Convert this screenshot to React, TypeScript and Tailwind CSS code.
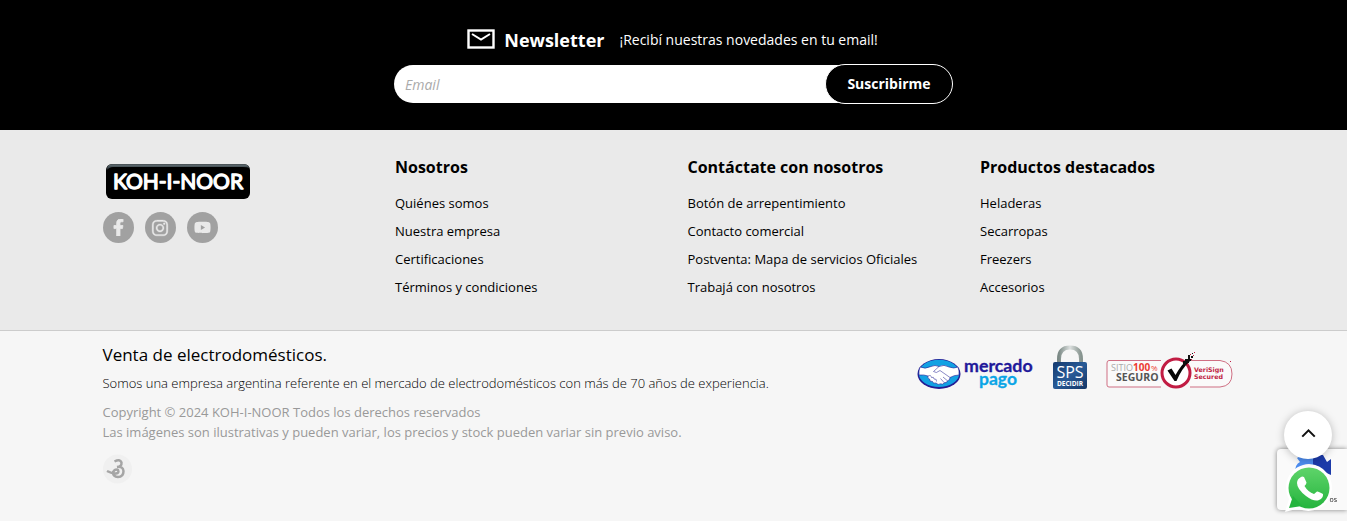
import React from "react";
import { ChevronUp } from "lucide-react";
import { FaFacebookF, FaInstagram, FaYoutube } from "react-icons/fa";

const columns = [
  {
    title: "Nosotros",
    links: ["Quiénes somos", "Nuestra empresa", "Certificaciones", "Términos y condiciones"],
  },
  {
    title: "Contáctate con nosotros",
    links: [
      "Botón de arrepentimiento",
      "Contacto comercial",
      "Postventa: Mapa de servicios Oficiales",
      "Trabajá con nosotros",
    ],
  },
  {
    title: "Productos destacados",
    links: ["Heladeras", "Secarropas", "Freezers", "Accesorios"],
  },
];

function Newsletter() {
  return (
    <section className="bg-black pt-6 pb-[26px] text-white">
      <div className="flex h-8 items-center justify-center">
        <svg width="28" height="22" viewBox="0 0 28 22" fill="none" stroke="white" aria-hidden="true">
          <rect x="1.5" y="1.5" width="25" height="17" strokeWidth="2.4" />
          <path d="M5 5 L14 10.6 L23 5" strokeWidth="2" />
        </svg>
        <h2 className="ml-[9px] text-lg leading-7 font-bold">Newsletter</h2>
        <p className="mr-[2px] ml-[15px] text-sm">¡Recibí nuestras novedades en tu email!</p>
      </div>
      <form className="mx-auto mt-2 flex max-w-[559px] items-center" onSubmit={(e) => e.preventDefault()}>
        <input
          type="email"
          aria-label="Email"
          placeholder="Email"
          className="-mr-5 h-[38px] min-w-0 flex-1 rounded-l-full bg-white px-[11px] text-sm text-black outline-none placeholder:text-[#aaa] placeholder:italic"
        />
        <button type="submit" className="relative h-10 w-32 rounded-full border border-white bg-black text-sm font-bold">
          Suscribirme
        </button>
      </form>
    </section>
  );
}

function Brand() {
  return (
    <svg width="146" height="37" viewBox="0 0 146 37" role="img" aria-label="KOH-I-NOOR" className="ml-[2px] block">
      <defs>
        <linearGradient id="gloss" x1="0" y1="0" x2="0" y2="1">
          <stop offset="0" stopColor="#68757a" />
          <stop offset="0.5" stopColor="#3b464b" />
          <stop offset="1" stopColor="#000" />
        </linearGradient>
      </defs>
      <rect x="1" y="1" width="144" height="35" rx="6" fill="#000" />
      <path d="M1.500 8 Q1.500 1.200 7 1.200 H139 Q143 1.200 144.500 5 Q142 4 138 4 H8 Q4 4 1.500 8Z" fill="url(#gloss)" />
      <text
        x="73"
        y="25.500"
        textAnchor="middle"
        fontFamily="Lato, sans-serif"
        fontWeight="400"
        fontSize="21"
        fill="#fff"
        stroke="#fff"
        strokeWidth="1.300"
        strokeLinejoin="round"
      >
        KOH-I-NOOR
      </text>
    </svg>
  );
}

function Social() {
  const style = "flex size-[31px] items-center justify-center rounded-full bg-[#a1a1a1] text-[#e9e9e9]";
  return (
    <div className="mt-3 flex gap-[11px]">
      <a href="#facebook" aria-label="Facebook" className={style}>
        <FaFacebookF size={17} stroke="currentColor" strokeWidth={24} />
      </a>
      <a href="#instagram" aria-label="Instagram" className={style}>
        <FaInstagram size={18} stroke="currentColor" strokeWidth={10} />
      </a>
      <a href="#youtube" aria-label="YouTube" className={style}>
        <FaYoutube size={17} />
      </a>
    </div>
  );
}

function MercadoPago() {
  return (
    <svg width="117" height="36" viewBox="0 0 117 36" role="img" aria-label="Mercado Pago" className="overflow-visible">
      <ellipse cx="22" cy="17" rx="21.500" ry="15" fill="#241c93" />
      <ellipse cx="22" cy="16.400" rx="20.300" ry="13.600" fill="#12a1e3" />
      <path
        d="M3 10 Q8 12.500 14 9.500 Q18 7.500 22 9.500 Q27 7 32 10 Q37 12 41 10 Q42.500 14 42 18 Q37 18 33 20.500 Q33 23.500 30.500 23.800 Q30 26 27.300 25.800 Q26 28 23.700 26.800 Q21 28.500 19 26 Q16 27 15.500 24.500 Q12.500 25 12.500 22 Q10 21 11 19 Q7 17.500 2 18 Q1.500 14 3 10Z"
        fill="#fff"
        stroke="#241c93"
        strokeWidth="0.6"
      />
      <path
        d="M22 9.500 L16.500 14.500 Q19 17 23 13.500 L33 20.500 M26 20 L30.500 23.800 M23.500 21.500 L27.300 25.800 M11 19 Q14 17.500 14.500 20.500 Q17 19.500 17 22 Q20 21.500 19.500 24.500"
        fill="none"
        stroke="#3d3aa0"
        strokeWidth="0.6"
      />
      <g fontFamily="Lato, sans-serif" fontWeight="700" strokeWidth="0.3" strokeLinejoin="round">
        <text x="47" y="14.500" fontSize="17.800" fill="#22199a" stroke="#22199a">
          mercado
        </text>
        <text x="62" y="27.500" fontSize="17.500" fill="#0aa5e6" stroke="#0aa5e6">
          pago
        </text>
      </g>
    </svg>
  );
}

function SpsDecidir() {
  return (
    <svg width="36" height="46" viewBox="0 0 36 46" role="img" aria-label="SPS Decidir">
      <defs>
        <linearGradient id="shackle">
          <stop offset="0" stopColor="#7c8a86" />
          <stop offset="0.5" stopColor="#dce0df" />
          <stop offset="1" stopColor="#87948f" />
        </linearGradient>
        <linearGradient id="body" x1="0" y1="0" x2="1" y2="1">
          <stop offset="0" stopColor="#14396e" />
          <stop offset="0.5" stopColor="#285b97" />
          <stop offset="1" stopColor="#153565" />
        </linearGradient>
      </defs>
      <path d="M7 20 V14 Q7 2.500 18 2.500 Q29 2.500 29 14 V20" fill="none" stroke="url(#shackle)" strokeWidth="4" />
      <rect x="1" y="17" width="34" height="27" rx="2" fill="url(#body)" />
      <g fill="#fff" textAnchor="middle" fontFamily="Open Sans, sans-serif">
        <text x="18" y="32.500" fontSize="16">
          SPS
        </text>
        <text x="18" y="41" fontSize="6.500" fontWeight="700">
          DECIDIR
        </text>
      </g>
    </svg>
  );
}

function SitioSeguro() {
  return (
    <svg width="128" height="42" viewBox="0 0 128 42" role="img" aria-label="Sitio 100% seguro, VeriSign Secured">
      <path
        d="M55 10.500 H3 Q1 10.500 1 13 V35 Q1 37 3 37 H55 M84 10.500 H114 Q126 12 126 24 Q126 36 114 37 H84"
        fill="#fafafa"
        stroke="#cf6f83"
        strokeWidth="1"
      />
      <g fontFamily="Open Sans, sans-serif">
        <text x="5" y="21" fontSize="9" fill="#aaa">
          SITIO
        </text>
        <text x="27" y="21" fontSize="10" fontWeight="700" fill="#ec3a31">
          100
        </text>
        <text x="45" y="21" fontSize="8" fill="#ec3a31">
          %
        </text>
        <text x="10" y="31" fontSize="10.500" fontWeight="700" fill="#555">
          SEGURO
        </text>
      </g>
      <circle cx="70" cy="23" r="14" fill="#fff" stroke="#c11c43" strokeWidth="3" />
      <path d="M61.500 20.500 L65.500 18.500 L69.500 25 Q75 15 82 9 L84 11 Q76 18 70.500 31 H68.500Z" fill="#050505" />
      <path d="M77 11h2v-2h3v-2h2v2h1v2h-2v2h-3v2h-3z M82 5h2v2h-2z M85 6h2v2h-2z M86 3h1v1h-1z" fill="#111" />
      <path d="M84 4h1v1h-1z M87 5h1v1h-1z M88 2h1v1h-1z M85 9h1v1h-1z M124 11h1v1h-1z" fill="#c11c43" />
      <g fontFamily="DejaVu Sans, sans-serif" fontWeight="700" fontSize="6.300" fill="#bf1d43">
        <text x="88" y="21.500">
          VeriSign
        </text>
        <text x="88" y="29">
          Secured
        </text>
      </g>
    </svg>
  );
}

function FloatingTools() {
  return (
    <div className="fixed right-0 bottom-0 h-28 w-[72px]">
      <div className="absolute top-10 right-0 h-[61px] w-[70px] overflow-hidden rounded-l-sm bg-[#fafafa] shadow-[0_0_5px_gray]">
        <svg className="absolute top-1 left-4" width="40" height="32" viewBox="0 0 40 32" aria-hidden="true">
          <path d="M4 5 L7 3 H20 V12 Q10 12 7 20 H2 Q2 11 7 9Z" fill="#4d8df0" />
          <path d="M20 2 H30 L34 9 L38 6 V22 L29 18 Q25 12 20 12Z" fill="#1c3aa9" />
        </svg>
        <span className="absolute right-[10px] bottom-1 text-[7px] leading-3 text-[#222]">os</span>
      </div>
      <a href="#whatsapp" aria-label="WhatsApp" className="absolute top-[53px] left-[9px]">
        <svg width="50" height="52" viewBox="0 0 50 52">
          <defs>
            <linearGradient id="wa" x1="0" y1="0" x2="0" y2="1">
              <stop offset="0" stopColor="#5fd46a" />
              <stop offset="1" stopColor="#25b43e" />
            </linearGradient>
          </defs>
          <path d="M25 2 A23.500 23.500 0 1 1 14 46.500 L1 50 L5 37 A23.500 23.500 0 0 1 25 2Z" fill="#fff" />
          <circle cx="25" cy="26" r="20.500" fill="url(#wa)" />
          <path d="M5 46 L9 34 L18 44Z" fill="#25b43e" />
          <path
            d="M17 15 Q18 14 20 15 L22.500 20.500 Q22.500 22 20.500 24 Q24 30 30 32 L33 29.500 Q34 29 39 32 Q39.500 36 35 38 Q30 40 22 34 Q13 27 13 21 Q13 17 17 15Z"
            fill="#fff"
          />
        </svg>
      </a>
      <button
        type="button"
        aria-label="Volver arriba"
        className="absolute top-[2px] left-[9px] flex size-12 items-center justify-center rounded-full bg-white pb-[3px] text-[#111] shadow-[0_1px_8px_rgba(0,0,0,0.25)]"
      >
        <ChevronUp size={25} strokeWidth={2} strokeLinecap="butt" strokeLinejoin="miter" />
      </button>
    </div>
  );
}

export default function App() {
  return (
    <div className="min-h-screen bg-[#f6f6f6] font-['Open_Sans',sans-serif] text-black">
      <Newsletter />
      <footer>
        <div className="border-b border-[#ccc] bg-[#eaeaea] pt-6 pb-[29px]">
          <div className="mx-auto grid max-w-[1170px] grid-cols-4">
            <div className="px-[14px] pt-[9px]">
              <Brand />
              <Social />
            </div>
            {columns.map((column) => (
              <nav key={column.title} aria-label={column.title} className="px-[14px]">
                <h3 className="text-base leading-[27px] font-bold">{column.title}</h3>
                <ul className="mt-2">
                  {column.links.map((link) => (
                    <li key={link} className="text-[13px] leading-7 whitespace-nowrap">
                      <a href="#tienda">{link}</a>
                    </li>
                  ))}
                </ul>
              </nav>
            ))}
          </div>
        </div>
        <div className="mx-auto flex max-w-[1170px] justify-between px-[14px] pt-3">
          <div>
            <h1 className="text-[17px] leading-6">Venta de electrodomésticos.</h1>
            <p className="mt-[6px] text-[13px] leading-5 font-light">
              Somos una empresa argentina referente en el mercado de electrodomésticos con más de 70 años de experiencia.
            </p>
            <p className="mt-[9px] text-[13px] leading-5 text-[#999]">
              Copyright © 2024 KOH-I-NOOR Todos los derechos reservados
              <br />
              Las imágenes son ilustrativas y pueden variar, los precios y stock pueden variar sin previo aviso.
            </p>
            <a href="#brandlive" aria-label="Desarrollo" className="mt-3 block w-[30px]">
              <svg width="30" height="30" viewBox="0 0 30 30" fill="none">
                <circle cx="14.500" cy="15" r="14.500" fill="#f0f0f0" />
                <path
                  d="M11.500 7.500 Q17 4.500 18.500 8.500 Q19 12.500 14 13 Q20 12 20.500 17 Q20.500 23 15 23 Q10 22.500 10 18.500 Q11.500 14.500 15 16 Q16.500 19 13 19.500 Q8.500 19.500 4 17"
                  stroke="#a5a5a5"
                  strokeWidth="2.500"
                />
              </svg>
            </a>
          </div>
          <div className="flex items-start gap-[18px] pt-[2px] pr-[11px]">
            <div className="pt-3">
              <MercadoPago />
            </div>
            <SpsDecidir />
            <div className="pt-[5px]">
              <SitioSeguro />
            </div>
          </div>
        </div>
      </footer>
      <FloatingTools />
    </div>
  );
}
